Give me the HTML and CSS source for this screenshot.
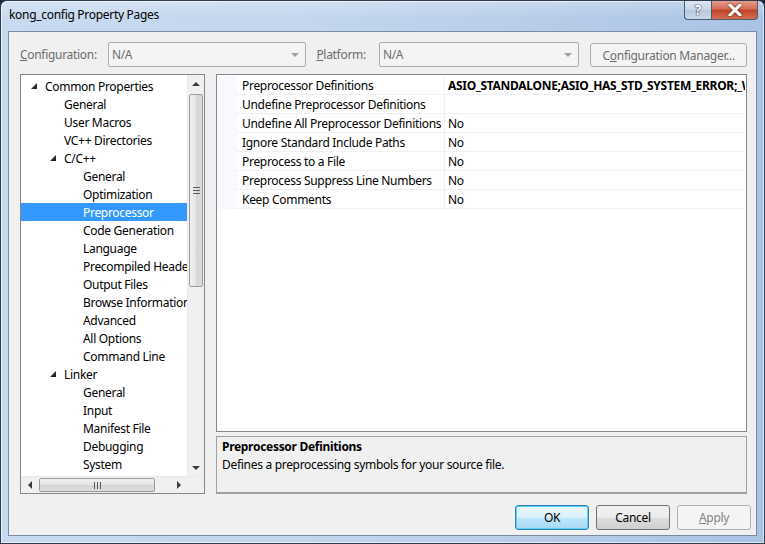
FILE: index.html
```html
<!DOCTYPE html>
<html>
<head>
<meta charset="utf-8">
<link rel="stylesheet" href="styles.css">
</head>
<body>
<div class="window">
  <div class="titlebar">
    <div class="title">kong_config Property Pages</div>
    <div class="caption-btns">
      <div class="cbtn help">?</div>
      <div class="cbtn close">
        <svg width="14" height="12" viewBox="0 0 14 12"><path d="M2 1 L12 11 M12 1 L2 11" stroke="#fff" stroke-width="3" stroke-linecap="square"/><path d="M2 1 L12 11 M12 1 L2 11" stroke="#fff" stroke-width="2.2"/></svg>
      </div>
    </div>
  </div>
  <div class="client">
    <div class="toolbar">
      <span class="lbl"><u>C</u>onfiguration:</span>
      <div class="combo combo-config"><span>N/A</span><i class="dd"></i></div>
      <span class="lbl lbl-plat"><u>P</u>latform:</span>
      <div class="combo combo-plat"><span>N/A</span><i class="dd"></i></div>
      <div class="btn btn-cfg">C<u>o</u>nfiguration Manager...</div>
    </div>
    <div class="main">
      <div class="tree">
        <div class="tree-body">
          <div class="tree-list">
            <div class="node l0"><i class="tri"></i>Common Properties</div>
            <div class="node l1">General</div>
            <div class="node l1">User Macros</div>
            <div class="node l1">VC++ Directories</div>
            <div class="node l1e"><i class="tri"></i>C/C++</div>
            <div class="node l2">General</div>
            <div class="node l2">Optimization</div>
            <div class="node l2 sel">Preprocessor</div>
            <div class="node l2">Code Generation</div>
            <div class="node l2">Language</div>
            <div class="node l2">Precompiled Headers</div>
            <div class="node l2">Output Files</div>
            <div class="node l2">Browse Information</div>
            <div class="node l2">Advanced</div>
            <div class="node l2">All Options</div>
            <div class="node l2">Command Line</div>
            <div class="node l1e"><i class="tri"></i>Linker</div>
            <div class="node l2">General</div>
            <div class="node l2">Input</div>
            <div class="node l2">Manifest File</div>
            <div class="node l2">Debugging</div>
            <div class="node l2">System</div>
          </div>
          <div class="vscroll">
            <div class="sarrow up"><i class="ua"></i></div>
            <div class="vtrack">
              <div class="vthumb"><i class="grip-h"></i></div>
            </div>
            <div class="sarrow down"><i class="da"></i></div>
          </div>
        </div>
        <div class="hscroll">
          <div class="harrow"><i class="la"></i></div>
          <div class="htrack"><div class="hthumb"><i class="grip-v"></i></div></div>
          <div class="harrow"><i class="ra"></i></div>
          <div class="corner"></div>
        </div>
      </div>
      <div class="right">
        <div class="grid">
          <div class="row"><div class="margin"></div><div class="name">Preprocessor Definitions</div><div class="val bold">ASIO_STANDALONE;ASIO_HAS_STD_SYSTEM_ERROR;_WIN32</div></div>
          <div class="row"><div class="margin"></div><div class="name">Undefine Preprocessor Definitions</div><div class="val"></div></div>
          <div class="row"><div class="margin"></div><div class="name">Undefine All Preprocessor Definitions</div><div class="val">No</div></div>
          <div class="row"><div class="margin"></div><div class="name">Ignore Standard Include Paths</div><div class="val">No</div></div>
          <div class="row"><div class="margin"></div><div class="name">Preprocess to a File</div><div class="val">No</div></div>
          <div class="row"><div class="margin"></div><div class="name">Preprocess Suppress Line Numbers</div><div class="val">No</div></div>
          <div class="row"><div class="margin"></div><div class="name">Keep Comments</div><div class="val">No</div></div>
        </div>
        <div class="desc">
          <div class="desc-title">Preprocessor Definitions</div>
          <div class="desc-text">Defines a preprocessing symbols for your source file.</div>
        </div>
      </div>
    </div>
    <div class="buttons">
      <div class="btn dbtn ok">OK</div>
      <div class="btn dbtn">Cancel</div>
      <div class="btn dbtn disabled"><u>A</u>pply</div>
    </div>
  </div>
</div>
</body>
</html>
```

FILE: styles.css
```css
* { box-sizing: border-box; }
html, body { margin: 0; padding: 0; }
body {
  width: 765px; height: 544px; overflow: hidden;
  font-family: "Noto Sans", "Open Sans", sans-serif;
  font-size: 12px; letter-spacing: -0.3px; color: #000;
  background: #1c2a3a;
}
.window {
  width: 765px; height: 544px;
  border-radius: 7px 7px 0 0;
  border: 1px solid #2f3c4d;
  background: linear-gradient(90deg, #c8daf0 0%, #c3d6ee 40%, #b7cde9 70%, #a9c3e5 100%);
  display: flex; flex-direction: column;
  box-shadow: inset 0 0 0 1px rgba(255,255,255,0.6);
  overflow: hidden;
}
.titlebar {
  height: 30px; flex: none; display: flex; align-items: flex-start;
  padding-left: 8px;
  background: linear-gradient(180deg, rgba(255,255,255,0.25), rgba(255,255,255,0) 60%);
  border-radius: 6px 6px 0 0;
}
.title { padding-top: 5px; font-size: 12px; color: #000; }
.caption-btns { margin-left: auto; margin-right: 6px; display: flex; margin-top: -1px; }
.cbtn {
  height: 20px; display: flex; align-items: center; justify-content: center;
  border: 1px solid #4a5a70; border-top: none;
}
.help {
  width: 27px; border-radius: 0 0 0 4px; border-right: none;
  background: linear-gradient(180deg, #dfe8f3, #c9d6e6 50%, #b6c6da 51%, #cbd8e8);
  color: #fff; font-weight: bold; font-size: 14px;
  text-shadow: 0 0 1px #2a3a55, 0 0 1px #2a3a55, 0 0 1px #2a3a55;
}
.close {
  width: 47px; border-radius: 0 0 4px 0;
  background: linear-gradient(180deg, #e8a492, #d46a56 48%, #c0412b 52%, #d5704f);
}
.close svg { filter: drop-shadow(0 0 1px #4a1a10); }
.client {
  flex: 1; min-width: 0; margin: 0 7px 7px 7px;
  background: #f0f0f0; border: 1px solid #7b8ba3;
  display: flex; flex-direction: column;
  padding: 10px 9px 0 11px;
}
.toolbar { display: flex; align-items: center; height: 25px; }
.lbl { color: #6d6d6d; }
.lbl-plat { margin-left: 10px; }
.combo {
  height: 25px; border: 1px solid #acacac; border-radius: 2px;
  background: #f4f4f4; color: #6d6d6d;
  display: flex; align-items: center; padding-left: 3px;
}
.combo-config { width: 199px; margin-left: 11px; }
.combo-plat { width: 201px; margin-left: 13px; }
.combo span { flex: 1; }
.dd { width: 0; height: 0; border-left: 4px solid transparent; border-right: 4px solid transparent; border-top: 4px solid #a0a0a0; margin-right: 6px; }
.btn {
  height: 24px; border: 1px solid #acacac; border-radius: 3px;
  display: flex; align-items: center; justify-content: center;
}
.btn-cfg { width: 157px; margin-left: 11px; color: #6d6d6d; background: #f4f4f4; margin-top: 1px; }
.main { display: flex; margin-top: 7px; height: 420px; min-width: 0; }
.tree {
  width: 185px; flex: none; border: 1px solid #828790; background: #fff;
  display: flex; flex-direction: column;
}
.tree-body { flex: 1; display: flex; min-height: 0; min-width: 0; }
.tree-list { flex: 1; min-width: 0; overflow: hidden; padding-top: 2px; white-space: nowrap; }
.node { height: 18px; line-height: 19px; padding-left: 24px; position: relative; }
.node.l1 { padding-left: 43px; }
.node.l1e { padding-left: 43px; }
.node.l2 { padding-left: 62px; }
.node.sel { background: #3399ff; color: #fff; }
.tri {
  position: absolute; top: 6px; width: 0; height: 0;
  border-left: 6px solid transparent; border-bottom: 6px solid #262626;
}
.l0 .tri { left: 10px; }
.l1e .tri { left: 29px; }
.vscroll { width: 17px; flex: none; display: flex; flex-direction: column; background: #f0f0f0; border-left: 1px solid #eaeaea; }
.sarrow { height: 17px; display: flex; align-items: center; justify-content: center; }
.ua { width: 0; height: 0; border-left: 4px solid transparent; border-right: 4px solid transparent; border-bottom: 4px solid #3d3d3d; }
.da { width: 0; height: 0; border-left: 4px solid transparent; border-right: 4px solid transparent; border-top: 4px solid #3d3d3d; }
.vtrack { flex: 1; padding: 2px 0; }
.vthumb {
  height: 193px; margin: 0 1px; border: 1px solid #9b9b9b; border-radius: 2px;
  background: linear-gradient(90deg, #f2f2f2, #e4e4e4 50%, #d6d6d6 51%, #dcdcdc);
  display: flex; align-items: center; justify-content: center;
}
.grip-h { width: 7px; height: 7px; border-top: 1px solid #5a5a5a; border-bottom: 1px solid #5a5a5a; position: relative; }
.grip-h::after { content: ""; position: absolute; left: 0; right: 0; top: 2px; border-top: 1px solid #5a5a5a; }
.hscroll { height: 17px; flex: none; display: flex; background: #f0f0f0; border-top: 1px solid #eaeaea; }
.harrow { width: 17px; display: flex; align-items: center; justify-content: center; }
.la { width: 0; height: 0; border-top: 4px solid transparent; border-bottom: 4px solid transparent; border-right: 4px solid #3d3d3d; }
.ra { width: 0; height: 0; border-top: 4px solid transparent; border-bottom: 4px solid transparent; border-left: 4px solid #3d3d3d; }
.htrack { flex: 1; padding: 0 15px 0 1px; display: flex; }
.hthumb {
  width: 116px; margin: 1px 0; border: 1px solid #9b9b9b; border-radius: 2px;
  background: linear-gradient(180deg, #f2f2f2, #e4e4e4 50%, #d6d6d6 51%, #dcdcdc);
  display: flex; align-items: center; justify-content: center;
}
.grip-v { width: 7px; height: 7px; border-left: 1px solid #5a5a5a; border-right: 1px solid #5a5a5a; position: relative; }
.grip-v::after { content: ""; position: absolute; top: 0; bottom: 0; left: 2px; border-left: 1px solid #5a5a5a; }
.corner { width: 17px; }
.right { margin-left: 11px; flex: 1; min-width: 0; display: flex; flex-direction: column; }
.grid { height: 358px; flex: none; border: 1px solid #828790; background: #fff; padding: 1px 1px 0 0; }
.row { display: flex; height: 19px; min-width: 0; }
.margin { width: 20px; flex: none; background: #f7f9fd; }
.name {
  width: 208px; flex: none; padding-left: 5px; line-height: 19px; white-space: nowrap; overflow: hidden;
  border-bottom: 1px solid #eff1f4; border-right: 1px solid #eff1f4;
}
.val {
  flex: 1; min-width: 0; padding-left: 3px; line-height: 19px; white-space: nowrap; overflow: hidden;
  border-bottom: 1px solid #eff1f4;
}
.bold { font-weight: bold; }
.desc {
  margin-top: 4px; flex: 1; background: #f0f0f0;
  border: 1px solid #a0a0a0; border-bottom: 2px solid #a0a0a0; padding: 1px 5px;
}
.desc-title { font-weight: bold; line-height: 17px; }
.desc-text { line-height: 19px; }
.buttons { display: flex; justify-content: flex-end; gap: 7px; margin-top: 11px; margin-right: -4px; }
.dbtn {
  width: 74px; height: 25px;
  background: linear-gradient(180deg, #f2f2f2, #ebebeb 50%, #dddddd 51%, #cfcfcf);
  border: 1px solid #707070;
}
.dbtn.ok { border-color: #3c7fb1; box-shadow: inset 0 0 0 1px #48d5fe; background: linear-gradient(180deg, #eaf6fd, #d9f0fc 50%, #bee6fd 51%, #a7d9f5); }
.dbtn.disabled { background: #f4f4f4; border-color: #adb2b5; color: #838383; }
```
